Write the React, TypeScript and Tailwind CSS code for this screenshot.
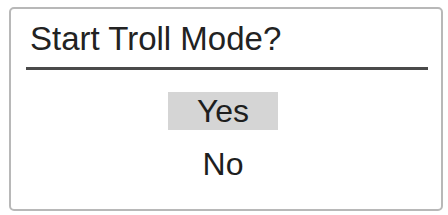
// Dialog asking whether to start Troll Mode, with Yes highlighted
export default function App() {
  return (
    <div
      className="w-[448px] h-[215px] bg-white overflow-hidden"
      style={{ fontFamily: '"Liberation Sans", Arial, sans-serif' }}
    >
      <div className="ml-[9px] mt-[7px] w-[434px] h-[204px] border-2 border-[#b8b8b8] rounded-[5px] flex flex-col">
        <div className="pl-[19px] mt-[11px] text-[33px] leading-[37px] text-[#222]">
          Start Troll Mode?
        </div>
        <div className="ml-[15px] mt-[10px] w-[402px] h-[3px] bg-[#4a4a4a]" />
        <div className="flex flex-col items-center pr-[6px] mt-[22px] text-[32px] text-[#1e1e1e]">
          <div className="w-[110px] h-[38px] leading-[38px] text-center bg-[#d5d5d5]">Yes</div>
          <div className="mt-[16px] leading-[37px]">No</div>
        </div>
      </div>
    </div>
  );
}
